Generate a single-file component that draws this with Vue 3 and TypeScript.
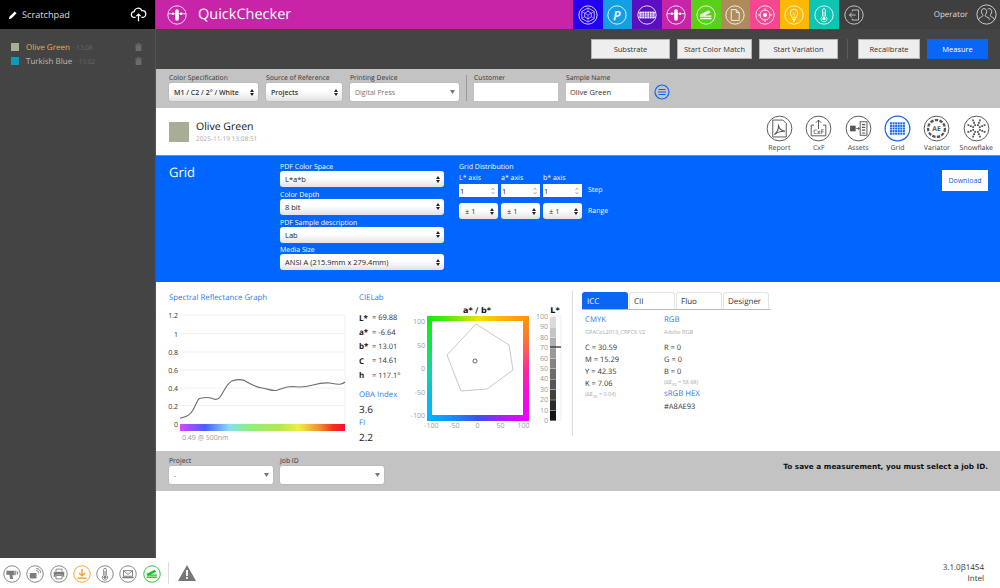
<script setup lang="ts">
interface Tile {
  color: string
  icon: string
}

// svg bodies of the icons, all drawn on a 24x24 box inside a circle
const ring = '<circle cx="12" cy="12" r="11"/>'

const quick = `${ring}<path d="M1.500 10.500H22.500"/><rect x="9.800" y="5" width="4.400" height="14" rx="2.200" fill="currentColor" stroke="none"/><rect x="6" y="9" width="2" height="3" fill="currentColor" stroke="none"/><rect x="16" y="9" width="2" height="3" fill="currentColor" stroke="none"/>`

const stapler = (r: string) => `${r}<path d="M5 11.500 L15.500 6.200 L17.500 9 L10 12.500 L18.500 12.500 L18.500 14.200 L5 14.200 Z" fill="currentColor" stroke="none"/><path d="M5 16.200H18.500" stroke-width="1.800"/>`

const thermo = `${ring}<path d="M10.200 13.500V6.200a1.800 1.800 0 0 1 3.600 0v7.300a3.600 3.600 0 1 1-3.600 0Z"/><circle cx="12" cy="16.400" r="2" fill="currentColor" stroke="none"/><path d="M12 8V15"/>`

const tiles: Tile[] = [
  {
    color: '#2200f2',
    icon: `${ring}<path d="M12 3.500 19.500 7.800V16.200L12 20.500 4.500 16.200V7.800Z" stroke-width="0.800"/><path d="M12 7.500 16 9.800V14.200L12 16.500 8 14.200V9.800Z" stroke-width="0.800"/><path d="M12 3.500V7.500M19.500 7.800 16 9.800M19.500 16.200 16 14.200M12 20.500V16.500M4.500 16.200 8 14.200M4.500 7.800 8 9.800M8 9.800 12 12 16 9.800M12 12V16.500" stroke-width="0.600"/>`,
  },
  {
    color: '#12a0e2',
    icon: `${ring}<text x="11.800" y="17.500" text-anchor="middle" font-family="Open Sans, sans-serif" font-size="15" font-weight="400" font-style="italic" fill="currentColor" stroke="currentColor" stroke-width="0.500">P</text>`,
  },
  {
    color: '#5a10c2',
    icon: `${ring}<path d="M1.500 9.500H22.500M1.500 14.500H22.500" stroke-width="0.900"/><rect x="3" y="8" width="18" height="8" fill="currentColor" stroke="none"/><path d="M6 8V16M9 8V16M12 8V16M15 8V16M18 8V16M3 10.700H21M3 13.300H21" stroke="#5a10c2" stroke-width="0.700"/>`,
  },
  { color: '#c724a8', icon: quick },
  { color: '#5ad018', icon: stapler(ring) },
  {
    color: '#ad8c5c',
    icon: `${ring}<path d="M7.500 5.500H13.500L17 9V18.500H7.500Z"/><path d="M13.500 5.500V9H17"/>`,
  },
  {
    color: '#f5468f',
    icon: `${ring}<circle cx="12" cy="12" r="6"/><circle cx="12" cy="12" r="2.400" fill="currentColor" stroke="none"/><path d="M12 3.500V7M12 17V20.500M3.500 12H7M17 12H20.500"/>`,
  },
  {
    color: '#ffb800',
    icon: `${ring}<path d="M9.600 15.500C9.600 13.500 7.500 12.500 7.500 9.600a4.500 4.500 0 0 1 9 0C16.500 12.500 14.400 13.500 14.400 15.500Z"/><path d="M10 17.300H14M10.800 19H13.200" stroke-width="1.300"/><path d="M10.500 9.500 12 12 13.500 9.500M12 12V15.500" stroke-width="0.700"/>`,
  },
  { color: '#10c4b4', icon: thermo },
]

const exitIcon = `${ring}<path d="M10 7.500V6H17.500V18H10V16.500"/><path d="M14 12H6.500M9.500 9 6.500 12 9.500 15"/>`
const operatorIcon = `${ring}<path d="M3 18C3 15.500 6.500 15 7.500 14 8 13.300 8 12.800 7.500 12 6.500 11 6.200 9.800 6.200 8.500 6.200 6.500 7.500 5.300 9.200 5.300 11 5.300 12.200 6.500 12.200 8.500 12.200 9.800 11.800 11 10.900 12 10.400 12.800 10.400 13.300 10.900 14 12 15 15.500 15.500 15.500 18"/><path d="M13.500 5.800C14 5.500 14.500 5.300 15 5.300 16.800 5.300 18 6.500 18 8.500 18 9.800 17.600 11 16.700 12 16.200 12.800 16.200 13.300 16.700 14 17.800 15 21 15.500 21 18"/>`

// the small blue-square matrix of the Grid button
let gridCells = ''
for (let r = 0; r < 5; r++) {
  for (let c = 0; c < 6; c++) {
    gridCells += `<rect x="${5.300 + c * 2.300}" y="${6.500 + r * 2.300}" width="1.800" height="1.800" fill="currentColor" stroke="none"/>`
  }
}

let flakeDots = ''
for (let a = 0; a < 8; a++) {
  const rad = (a * Math.PI) / 4 + Math.PI / 8
  for (const d of [3.200, 5.500, 7.800]) {
    flakeDots += `<rect x="${(12 + Math.cos(rad) * d - 0.800).toFixed(2)}" y="${(12 + Math.sin(rad) * d - 0.800).toFixed(2)}" width="1.600" height="1.600" fill="currentColor" stroke="none"/>`
  }
}

const sampleTools = [
  {
    label: 'Report',
    active: false,
    icon: `${ring}<path d="M6 4.500H15L18 7.500V19.500H6Z"/><path d="M7.500 17.500C10 15 11.500 11 11 8.500 11 11 13 14 17 14.500 14 14.300 10.500 15 7.500 17.500Z" stroke-width="1"/>`,
  },
  {
    label: 'CxF',
    active: false,
    icon: `${ring}<path d="M8 9H5.500V18.500H18.500V9H16"/><path d="M12 12.500V4.500M9.500 7 12 4.500 14.500 7"/><text x="12" y="17" text-anchor="middle" font-family="Open Sans, sans-serif" font-size="5.500" font-weight="600" fill="currentColor" stroke="none">CxF</text>`,
  },
  {
    label: 'Assets',
    active: false,
    icon: `${ring}<rect x="4.500" y="9.500" width="5" height="5" fill="currentColor" stroke="none"/><path d="M10 12H12.500M11.500 11 13 12 11.500 13" stroke-width="0.800"/><rect x="13.500" y="6" width="6" height="12"/><path d="M15 8.500H18M15 11H18M15 13.500H18M15 16H18" stroke-width="1.100"/>`,
  },
  { label: 'Grid', active: true, icon: `${ring}${gridCells}` },
  {
    label: 'Variator',
    active: false,
    icon: `${ring}<circle cx="12" cy="12" r="7.500" stroke-width="2" stroke-dasharray="3 1.200"/><text x="12" y="14.200" text-anchor="middle" font-family="Open Sans, sans-serif" font-size="6" font-weight="700" fill="currentColor" stroke="none">AE</text>`,
  },
  { label: 'Snowflake', active: false, icon: `${ring}${flakeDots}` },
]

const footerTools = [
  {
    color: '#7d7d7d',
    icon: `${ring}<path d="M4.500 7.500H15.500V13.500H12.500L13.500 18.500H9.500L8.500 13H4.500Z" fill="currentColor" stroke="none"/><path d="M17 7.500V13.500M19.500 8.500V12.500" stroke-width="1.300"/>`,
  },
  {
    color: '#7d7d7d',
    icon: `${ring}<rect x="5" y="10.500" width="9" height="7.500" rx="1" fill="currentColor" stroke="none"/><path d="M13 7C15.500 7 17 8.500 17 11M13.500 4.500C17 4.500 19.500 7 19.500 10.500" stroke-width="1.200"/>`,
  },
  {
    color: '#7d7d7d',
    icon: `${ring}<path d="M8 8.500V5.500H16V8.500" /><path d="M5 9H19V15.500H16.500V13H7.500V15.500H5Z" fill="currentColor" stroke="none"/><path d="M8 14H16V18.500H8Z"/>`,
  },
  {
    color: '#ff9a1f',
    icon: `${ring}<path d="M12 5V14.500M8 10.500 12 14.500 16 10.500" stroke-width="1.800"/><path d="M6 17.500H18" stroke-width="1.800"/>`,
  },
  { color: '#7d7d7d', icon: thermo },
  {
    color: '#7d7d7d',
    icon: `${ring}<path d="M6 7.500H18V15H6Z"/><path d="M6 7.500 12 12.500 18 7.500"/><path d="M4 15.500H20L19 17.500H5Z" fill="currentColor" stroke="none"/>`,
  },
  { color: '#12c32c', icon: stapler(ring) },
]

const pdfFields = [
  { label: 'PDF Color Space', value: 'L*a*b' },
  { label: 'Color Depth', value: '8 bit' },
  { label: 'PDF Sample description', value: 'Lab' },
  { label: 'Media Size', value: 'ANSI A (215.9mm x 279.4mm)' },
]

const axes = ['L* axis', 'a* axis', 'b* axis']

const labValues = [
  { name: 'L*', value: '= 69.88' },
  { name: 'a*', value: '= -6.64' },
  { name: 'b*', value: '= 13.01' },
  { name: 'C', value: '= 14.61' },
  { name: 'h', value: '= 117.1°' },
]

const cmyk = ['C = 30.59', 'M = 15.29', 'Y = 42.35', 'K = 7.06']
const rgb = ['R = 0', 'G = 0', 'B = 0']
const tabs = ['ICC', 'CII', 'Fluo', 'Designer']

// spectral chart, in page coordinates so that it is easy to read against the screenshot
const yTicks = [
  { label: '1.2', y: 315 },
  { label: '1', y: 333.500 },
  { label: '0.8', y: 352 },
  { label: '0.6', y: 370 },
  { label: '0.4', y: 388 },
  { label: '0.2', y: 405.500 },
  { label: '0', y: 424 },
]

const spectralCurve =
  'M180 418.300C187 417 191 414 193 410 C196 405 197 400 199.500 398.500 C204 397.500 208 397 211 398 C215 400 218 400 220 397 C224 392 226 384 232 381 C238 379 243 379 247 382 C252 385 256 387 262 388 C268 389 272 391 276 390.500 C282 389 285 386.500 292 386.500 C300 387.500 306 387 313 385 C320 383 325 382.500 330 383 C335 384 338 385 341 384 C343 383.500 344 383 345 382'

const abTicks = [
  { label: '100', pos: 100 },
  { label: '50', pos: 50 },
  { label: '0', pos: 0 },
  { label: '-50', pos: -50 },
  { label: '-100', pos: -100 },
]

const lTicks = [100, 90, 80, 70, 60, 50, 40, 30, 20, 10, 0]
const lSteps = [0, 1, 2, 3, 4, 5, 6, 7, 8, 9]

function abX(v: number) {
  return 477.500 + v * 0.4600
}
function abY(v: number) {
  return 368 - v * 0.4700
}
function lY(v: number) {
  return 420 - v * 1.0400
}
function stepColor(i: number) {
  const g = Math.round(i * 24)
  return `rgb(${g},${g},${g})`
}
</script>

<template>
  <div class="app">
    <div class="top">
      <aside class="sidebar">
        <div class="side-head">
          <svg class="pencil" viewBox="0 0 12 12"><path d="M1 11 1.700 8 8 1.700 10.300 4 4 10.300Z" fill="#fff" /></svg>
          <span class="side-title">Scratchpad</span>
          <svg class="cloud" viewBox="0 0 20 18" fill="none" stroke="#fff" stroke-width="1.500">
            <path d="M6.500 12.500H5A3.500 3.500 0 0 1 4.800 5.500 4.800 4.800 0 0 1 14 4.500 4 4 0 0 1 15.500 12.500H13.500" />
            <path d="M10 17V8.500M7.500 11 10 8.500 12.500 11" />
          </svg>
        </div>
        <ul class="side-list">
          <li>
            <span class="chip olive"></span>
            <span class="item-name current">Olive Green</span>
            <span class="item-time">· 13:08</span>
            <svg class="trash" viewBox="0 0 8 9"><path d="M3 0H5V1H8V2H0V1H3ZM.7 2.600H7.300V9H.7Z" fill="#6b6b6b" /></svg>
          </li>
          <li>
            <span class="chip turkish"></span>
            <span class="item-name">Turkish Blue</span>
            <span class="item-time">· 13:02</span>
            <svg class="trash" viewBox="0 0 8 9"><path d="M3 0H5V1H8V2H0V1H3ZM.7 2.600H7.300V9H.7Z" fill="#6b6b6b" /></svg>
          </li>
        </ul>
      </aside>

      <main class="main">
        <header class="app-head">
          <div class="brand">
            <svg class="brand-icon" viewBox="0 0 24 24" v-html="quick"></svg>
            <span class="brand-name">QuickChecker</span>
          </div>
          <div class="tiles">
            <div v-for="t in tiles" :key="t.color" class="tile" :style="{ background: t.color }">
              <svg viewBox="0 0 24 24" v-html="t.icon"></svg>
            </div>
          </div>
          <div class="head-right">
            <svg class="exit" viewBox="0 0 24 24" v-html="exitIcon"></svg>
            <span class="operator">Operator</span>
            <svg class="op-icon" viewBox="0 0 24 24" v-html="operatorIcon"></svg>
          </div>
        </header>

        <div class="actions">
          <button class="act w79">Substrate</button>
          <button class="act w75">Start Color Match</button>
          <button class="act w79">Start Variation</button>
          <span class="act-sep"></span>
          <button class="act w62">Recalibrate</button>
          <button class="act measure">Measure</button>
        </div>

        <div class="spec-bar">
          <label class="fld w89">
            <span>Color Specification</span>
            <select class="sel"><option>M1 / C2 / 2° / White</option></select>
          </label>
          <label class="fld w76">
            <span>Source of Reference</span>
            <select class="sel"><option>Projects</option></select>
          </label>
          <label class="fld w109">
            <span>Printing Device</span>
            <select class="sel flat muted"><option>Digital Press</option></select>
          </label>
          <span class="spec-sep"></span>
          <label class="fld w84">
            <span>Customer</span>
            <input class="txt" type="text" />
          </label>
          <label class="fld w83">
            <span>Sample Name</span>
            <input class="txt" type="text" value="Olive Green" />
          </label>
          <svg class="notes" viewBox="0 0 16 16" fill="none" stroke="#0a66f0">
            <circle cx="8" cy="8" r="7" stroke-width="1.200" />
            <path d="M4.500 5.500H11.500M4 8H12M4.500 10.500H11.500" stroke-width="1.200" />
          </svg>
        </div>

        <div class="sample-head">
          <span class="sample-chip"></span>
          <div class="sample-text">
            <div class="sample-name">Olive Green</div>
            <div class="sample-date">2025-11-19 13:08:51</div>
          </div>
          <div class="tools">
            <div v-for="tool in sampleTools" :key="tool.label" class="tool" :class="{ active: tool.active }">
              <svg viewBox="0 0 24 24" v-html="tool.icon"></svg>
              <span>{{ tool.label }}</span>
            </div>
          </div>
        </div>

        <section class="grid-panel">
          <h2>Grid</h2>
          <div class="pdf-col">
            <label v-for="f in pdfFields" :key="f.label" class="pdf-field">
              <span>{{ f.label }}</span>
              <select class="sel big"><option>{{ f.value }}</option></select>
            </label>
          </div>
          <div class="dist-col">
            <div class="dist-title">Grid Distribution</div>
            <div class="axis-row">
              <span v-for="a in axes" :key="a" class="axis-name">{{ a }}</span>
            </div>
            <div class="axis-row step-row">
              <input v-for="a in axes" :key="a" class="num" type="text" value="1" />
              <span class="row-note">Step</span>
            </div>
            <div class="axis-row range-row">
              <select v-for="a in axes" :key="a" class="sel range"><option>± 1</option></select>
              <span class="row-note">Range</span>
            </div>
          </div>
          <button class="download">Download</button>
        </section>

        <section class="results">
          <div class="spectral">
            <div class="sec-title">Spectral Reflectance Graph</div>
            <svg class="spectral-svg" viewBox="169 305 185 140" width="185" height="140">
              <defs>
                <linearGradient id="rainbow">
                  <stop offset="0" stop-color="#d848ff" />
                  <stop offset="0.15" stop-color="#4a5cff" />
                  <stop offset="0.3" stop-color="#88dcf4" />
                  <stop offset="0.42" stop-color="#8cf07c" />
                  <stop offset="0.6" stop-color="#b4e84c" />
                  <stop offset="0.72" stop-color="#ecf040" />
                  <stop offset="0.85" stop-color="#f48a28" />
                  <stop offset="0.93" stop-color="#fa2a20" />
                  <stop offset="1" stop-color="#ff1030" />
                </linearGradient>
              </defs>
              <g v-for="t in yTicks" :key="t.label">
                <line x1="180" :x2="345" :y1="t.y" :y2="t.y" stroke="#f0f0f0" />
                <text x="178" :y="t.y + 3" text-anchor="end" class="chart-num dark">{{ t.label }}</text>
              </g>
              <line x1="345" x2="345" y1="315" y2="424" stroke="#f0f0f0" />
              <path :d="spectralCurve" fill="none" stroke="#6e6e6e" stroke-width="1.100" />
              <rect x="180" y="424" width="165" height="7" fill="url(#rainbow)" />
              <text x="182" y="440" class="chart-num light">0.49 @ 500nm</text>
            </svg>
          </div>

          <div class="lab-col">
            <div class="sec-title">CIELab</div>
            <div class="lab-rows">
              <div v-for="v in labValues" :key="v.name" class="lab-row">
                <b>{{ v.name }}</b><span>{{ v.value }}</span>
              </div>
            </div>
            <div class="sec-title oba">OBA Index</div>
            <div class="big-num">3.6</div>
            <div class="sec-title">FI</div>
            <div class="big-num">2.2</div>
          </div>

          <svg class="ab-svg" viewBox="414 295 158 145" width="158" height="145">
            <text x="477" y="313" text-anchor="middle" class="ab-title">a* / b*</text>
            <foreignObject x="427" y="316" width="102" height="105">
              <div class="hue-frame"></div>
            </foreignObject>
            <rect x="432" y="321" width="91" height="94" fill="#fff" />
            <polygon points="476,324 509,345 513,370 487,389 461,391 447,355" fill="none" stroke="#c8c8c8" stroke-width="1" />
            <circle cx="475" cy="361" r="2" fill="none" stroke="#555" stroke-width="0.900" />
            <text v-for="t in abTicks" :key="'y' + t.pos" x="425" :y="abY(t.pos) + 3" text-anchor="end" class="chart-num light">{{ t.label }}</text>
            <text v-for="t in abTicks" :key="'x' + t.pos" :x="abX(-t.pos)" y="428" text-anchor="middle" class="chart-num light">{{ t.pos === 0 ? '0' : String(-t.pos) }}</text>

            <text x="555" y="313" text-anchor="middle" class="ab-title">L*</text>
            <rect x="550" y="316" width="11" height="104" fill="#fff" stroke="#eee" />
            <rect v-for="i in lSteps" :key="i" x="550" :y="lY((i + 1) * 10) + 1" width="6" height="10" :fill="stepColor(i)" opacity="0.92" />
            <text v-for="t in lTicks" :key="t" x="548" :y="lY(t) + 3" text-anchor="end" class="chart-num light">{{ t }}</text>
            <line x1="550" x2="561" y1="347" y2="347" stroke="#222" stroke-width="1.200" />
          </svg>

          <div class="color-col">
            <div class="tabs">
              <div v-for="(t, i) in tabs" :key="t" class="tab" :class="{ on: i === 0 }">{{ t }}</div>
            </div>
            <div class="conv">
              <div class="conv-col">
                <div class="sec-title">CMYK</div>
                <div class="profile">GRACoL2013_CRPC6 V2</div>
                <div v-for="c in cmyk" :key="c" class="conv-val">{{ c }}</div>
                <div class="delta">(ΔE<sub>00</sub> = 0.04)</div>
              </div>
              <div class="conv-col">
                <div class="sec-title">RGB</div>
                <div class="profile">Adobe RGB</div>
                <div v-for="c in rgb" :key="c" class="conv-val">{{ c }}</div>
                <div class="delta">(ΔE<sub>00</sub> = 58.68)</div>
                <div class="sec-title hex-title">sRGB HEX</div>
                <div class="conv-val hex">#A8AE93</div>
              </div>
            </div>
          </div>
        </section>

        <div class="job-bar">
          <label class="fld w104">
            <span>Project</span>
            <select class="sel flat muted"><option>-</option></select>
          </label>
          <label class="fld w104">
            <span>Job ID</span>
            <select class="sel flat"><option></option></select>
          </label>
          <span class="job-note">To save a measurement, you must select a job ID.</span>
        </div>
      </main>
    </div>

    <footer class="footer">
      <div class="foot-icons">
        <svg v-for="(f, i) in footerTools" :key="i" viewBox="0 0 24 24" :style="{ color: f.color }" v-html="f.icon"></svg>
      </div>
      <span class="foot-sep"></span>
      <svg class="warn" viewBox="0 0 18 16">
        <path d="M9 0 18 16H0Z" fill="#777" />
        <rect x="8.100" y="5" width="1.800" height="6" fill="#fff" />
        <rect x="8.100" y="12" width="1.800" height="1.800" fill="#fff" />
      </svg>
      <div class="version">
        <div>3.1.0β1454</div>
        <div>Intel</div>
      </div>
    </footer>
  </div>
</template>

<style>
html,
body {
  margin: 0;
  background: #fff;
}
</style>

<style scoped>
.app {
  width: 1000px;
  height: 588px;
  display: flex;
  flex-direction: column;
  overflow: hidden;
  font-family: 'Open Sans', sans-serif;
  font-size: 8px;
  color: #222;
  text-rendering: geometricPrecision;
}
.top {
  flex: 1;
  display: flex;
  min-height: 0;
}

/* sidebar */
.sidebar {
  width: 155px;
  flex: none;
  background: #444;
  border-right: 1px solid #555;
}
.side-head {
  height: 29px;
  background: #000;
  display: flex;
  align-items: center;
  padding: 0 8px;
  box-sizing: border-box;
}
.pencil {
  width: 10px;
  height: 10px;
  margin-right: 4px;
}
.side-title {
  color: #ddd;
  font-size: 9.200px;
  flex: 1;
}
.cloud {
  width: 17px;
  height: 15px;
}
.side-list {
  list-style: none;
  margin: 0;
  padding: 11px 0 0 11px;
}
.side-list li {
  display: flex;
  align-items: center;
  height: 14px;
  font-size: 8px;
}
.chip {
  width: 8px;
  height: 8px;
  margin-right: 7px;
}
.olive {
  background: #a8ae93;
}
.turkish {
  background: #0a9bc0;
}
.item-name {
  color: #bbb;
}
.item-name.current {
  color: #e8b24a;
}
.item-time {
  color: #666;
  font-size: 6.500px;
  margin-left: 3px;
  flex: 1;
}
.trash {
  width: 7px;
  height: 8px;
  margin-right: 13px;
}

/* main column */
.main {
  flex: 1;
  display: flex;
  flex-direction: column;
  min-width: 0;
}
.app-head {
  height: 29px;
  flex: none;
  display: flex;
  background: #3f3f3f;
}
.brand {
  width: 417px;
  background: #c724a8;
  display: flex;
  align-items: center;
  color: #fff;
  padding-left: 11px;
  box-sizing: border-box;
}
.brand-icon {
  width: 20px;
  height: 20px;
  margin-right: 11px;
  fill: none;
  stroke: currentColor;
  stroke-width: 1;
}
.brand-name {
  font-size: 14.500px;
}
.tiles {
  display: flex;
}
.tile {
  width: 29.500px;
  height: 29px;
  display: flex;
  align-items: center;
  justify-content: center;
  color: #fff;
}
.tile svg {
  width: 20px;
  height: 20px;
  fill: none;
  stroke: currentColor;
  stroke-width: 1;
}
.head-right {
  flex: 1;
  display: flex;
  align-items: center;
  color: #ddd;
  padding: 0 3px 0 5px;
}
.exit {
  width: 20px;
  height: 20px;
  fill: none;
  stroke: currentColor;
  stroke-width: 1;
}
.operator {
  font-size: 8px;
  margin-left: auto;
  margin-right: 8px;
}
.op-icon {
  width: 21px;
  height: 21px;
  fill: none;
  stroke: currentColor;
  stroke-width: 1;
}

/* action row */
.actions {
  height: 40px;
  flex: none;
  background: #444;
  display: flex;
  align-items: center;
  justify-content: flex-end;
  gap: 7px;
  padding: 0 12px 0 0;
  box-sizing: border-box;
}
.act {
  height: 20px;
  padding: 0;
  background: #eee;
  border: 1px solid #b5b5b5;
  font: 7.500px 'Open Sans', sans-serif;
  color: #333;
}
.w79 {
  width: 79px;
}
.w75 {
  width: 75px;
}
.w62 {
  width: 62px;
}
.act-sep {
  width: 1px;
  height: 20px;
  background: #5c5c5c;
  margin: 0 3px 0 2px;
}
.measure {
  width: 61px;
  background: #0a66f5;
  border-color: #0a66f5;
  color: #fff;
}

/* form rows */
.spec-bar {
  height: 39px;
  flex: none;
  background: #c3c3c3;
  display: flex;
  align-items: flex-end;
  gap: 8px;
  padding: 0 0 7px 13px;
  box-sizing: border-box;
}
.fld {
  display: flex;
  flex-direction: column;
  font-size: 6.800px;
  line-height: 10px;
  color: #333;
}
.w89 {
  width: 89px;
}
.w76 {
  width: 76px;
}
.w109 {
  width: 109px;
}
.w84 {
  width: 84px;
}
.w83 {
  width: 83px;
}
.w104 {
  width: 104px;
}
.sel {
  appearance: none;
  height: 18px;
  width: 100%;
  border: none;
  border-radius: 2px;
  padding: 0 10px 0 5px;
  font: 600 7px 'Open Sans', sans-serif;
  color: #333;
  background:
    url("data:image/svg+xml,%3Csvg xmlns='http://www.w3.org/2000/svg' width='4' height='7'%3E%3Cpath d='M2 0 4 3H0ZM2 7 0 4H4Z' fill='%23222'/%3E%3C/svg%3E") no-repeat right 4px center,
    linear-gradient(#fff 45%, #e2e2e2);
  box-shadow: 0 0 1px #888;
}
.sel.flat {
  font-weight: 400;
  background:
    url("data:image/svg+xml,%3Csvg xmlns='http://www.w3.org/2000/svg' width='5' height='4'%3E%3Cpath d='M0 0H5L2.500 4Z' fill='%23777'/%3E%3C/svg%3E") no-repeat right 4px center,
    #fff;
}
.sel.muted {
  color: #777;
}
.spec-sep {
  width: 1px;
  height: 26px;
  background: #999;
  margin: 0 -1px 0 -1px;
  align-self: flex-end;
}
.txt {
  height: 18px;
  box-sizing: border-box;
  width: 100%;
  border: none;
  padding: 0 4px;
  background: #fff;
  font: 7.500px 'Open Sans', sans-serif;
  color: #333;
  outline: none;
}
.notes {
  width: 16px;
  height: 16px;
  margin: 0 0 1px -3px;
}
.sample-head {
  height: 47px;
  flex: none;
  display: flex;
  align-items: center;
  background: #fff;
  padding-left: 13px;
  box-sizing: border-box;
}
.sample-chip {
  width: 20px;
  height: 20px;
  background: #a8ae93;
  margin-right: 7px;
}
.sample-name {
  font-size: 10.500px;
  line-height: 14px;
  color: #111;
}
.sample-date {
  font-size: 6.500px;
  line-height: 10px;
  color: #aaa;
}
.tools {
  margin-left: auto;
  display: flex;
  padding-right: 4px;
}
.tool {
  width: 39.400px;
  display: flex;
  flex-direction: column;
  align-items: center;
  color: #444;
  font-size: 7px;
  line-height: 9px;
  gap: 2px;
  padding-top: 5px;
}
.tool svg {
  width: 27px;
  height: 27px;
  fill: none;
  stroke: #555;
  stroke-width: 0.850;
  color: #555;
}
.tool.active svg {
  stroke: #1a66f0;
  color: #1a66f0;
  stroke-width: 1.100;
}

/* blue grid panel */
.grid-panel {
  height: 127px;
  flex: none;
  background: #0066ff;
  color: #fff;
  display: flex;
  padding: 7px 12px 0 13px;
  box-sizing: border-box;
  border-top: 1px solid #5b8fd8;
}
.grid-panel h2 {
  margin: 0;
  width: 111px;
  font-size: 13px;
  line-height: 18px;
  font-weight: 400;
  flex: none;
}
.pdf-col {
  width: 164px;
  flex: none;
  display: flex;
  flex-direction: column;
  margin-right: 15px;
}
.pdf-field {
  display: flex;
  flex-direction: column;
  font-size: 7px;
  line-height: 9.500px;
  margin-bottom: 3.800px;
}
.sel.big {
  height: 16px;
  margin-top: -1.500px;
  border-radius: 3px;
  font-weight: 400;
  font-size: 7.500px;
  color: #222;
  padding-left: 5px;
}
.dist-col {
  flex: none;
}
.dist-title {
  font-size: 7px;
  line-height: 10px;
}
.axis-row {
  display: flex;
  gap: 3px;
  align-items: center;
}
.axis-name {
  width: 39px;
  font-size: 7px;
  line-height: 11px;
}
.step-row {
  margin-top: 0;
}
.num {
  width: 39px;
  height: 13px;
  box-sizing: border-box;
  border: none;
  padding: 0 1px;
  font: 7.500px 'Open Sans', sans-serif;
  color: #222;
  background:
    url("data:image/svg+xml,%3Csvg xmlns='http://www.w3.org/2000/svg' width='4' height='8'%3E%3Cpath d='M.5 3 2 1 3.500 3M.5 5 2 7 3.500 5' fill='none' stroke='%23999' stroke-width='.7'/%3E%3C/svg%3E") no-repeat right 3px center,
    #fff;
}
.range-row {
  margin-top: 6px;
}
.sel.range {
  width: 39px;
  height: 16px;
  border-radius: 3px;
  font-weight: 400;
  padding-left: 6px;
  font-size: 7.500px;
}
.row-note {
  font-size: 7px;
  margin-left: 3px;
}
.download {
  margin-left: auto;
  width: 46px;
  height: 21px;
  margin-top: 7px;
  border: none;
  background: #fff;
  color: #0a5fd8;
  font: 7px 'Open Sans', sans-serif;
  padding: 0;
}

/* results */
.results {
  height: 169px;
  flex: none;
  background: #fff;
  display: flex;
  padding: 10px 0 0 13px;
  box-sizing: border-box;
}
.sec-title {
  color: #2f7bf5;
  font-size: 7.800px;
  line-height: 12px;
}
.spectral {
  width: 190px;
  flex: none;
}
.spectral-svg {
  display: block;
  margin-top: 1px;
  overflow: visible;
}
.chart-num {
  font-size: 7px;
  font-family: 'Open Sans', sans-serif;
}
.chart-num.dark {
  fill: #333;
}
.chart-num.light {
  fill: #9a9a9a;
}
.lab-col {
  width: 55px;
  flex: none;
}
.lab-rows {
  margin-top: 7px;
}
.lab-row {
  display: flex;
  height: 14.400px;
  align-items: center;
  font-size: 7.500px;
  color: #333;
}
.lab-row b {
  width: 13px;
  color: #222;
  font-size: 8px;
}
.oba {
  margin-top: 6px;
}
.big-num {
  font-size: 10px;
  line-height: 16px;
  color: #222;
}
.ab-svg {
  flex: none;
  display: block;
  margin-top: 3px;
  overflow: visible;
}
.ab-title {
  font: 700 8px 'DejaVu Sans', sans-serif;
  fill: #111;
}
.hue-frame {
  width: 102px;
  height: 105px;
  background: conic-gradient(#f0e400 0deg, #ff9a00 42deg, #ff2a9a 90deg, #f000ff 135deg, #3a50f0 180deg, #00b4ff 225deg, #10d8a0 270deg, #10ee10 315deg, #f0e400 360deg);
}
.color-col {
  flex: none;
  width: 205px;
  height: 146px;
  margin-top: -2px;
  border-left: 1px solid #ddd;
  padding-left: 9px;
}
.tabs {
  display: flex;
  gap: 1.500px;
  margin-top: 2px;
  border-bottom: 1px solid #bbb;
  width: 189px;
}
.tab {
  width: 45.500px;
  height: 17px;
  line-height: 17px;
  box-sizing: border-box;
  padding-left: 4px;
  font-size: 8px;
  color: #333;
  border: 1px solid #e4e4e4;
  border-bottom: none;
  border-radius: 3px 3px 0 0;
}
.tab.on {
  background: #0a66f5;
  color: #fff;
  border-color: #0a66f5;
}
.conv {
  display: flex;
  padding: 4px 0 0 3px;
}
.conv-col {
  width: 79px;
}
.profile {
  font-size: 5.500px;
  line-height: 10px;
  color: #aaa;
  margin-bottom: 4.500px;
  margin-top: 1px;
  white-space: nowrap;
}
.conv-val {
  font-size: 7.500px;
  line-height: 12px;
  color: #333;
}
.delta {
  font-size: 5.500px;
  line-height: 8px;
  color: #aaa;
}
.delta sub {
  font-size: 4px;
  line-height: 0;
}
.hex-title {
  margin-top: 2px;
}
.hex {
  margin-top: 1px;
}
.job-bar {
  height: 40px;
  flex: none;
  background: #c3c3c3;
  display: flex;
  align-items: flex-end;
  gap: 7px;
  padding: 0 12px 7px 13px;
  box-sizing: border-box;
}
.job-note {
  margin-left: auto;
  align-self: center;
  font: 700 7.300px 'DejaVu Sans', sans-serif;
  color: #111;
  margin-bottom: 3px;
}

/* footer */
.footer {
  height: 30px;
  flex: none;
  display: flex;
  align-items: center;
  background: #fff;
  padding: 0 16px 0 3px;
  box-sizing: border-box;
}
.foot-icons {
  display: flex;
  gap: 5.300px;
  padding-top: 1px;
}
.foot-icons svg {
  width: 18px;
  height: 18px;
  fill: none;
  stroke: currentColor;
  stroke-width: 1.200;
}
.foot-sep {
  width: 1px;
  height: 22px;
  background: #ddd;
  margin: 0 9px 0 7px;
}
.warn {
  width: 18px;
  height: 16px;
}
.version {
  margin-left: auto;
  text-align: right;
  font-size: 8px;
  line-height: 11px;
  color: #333;
}
</style>
